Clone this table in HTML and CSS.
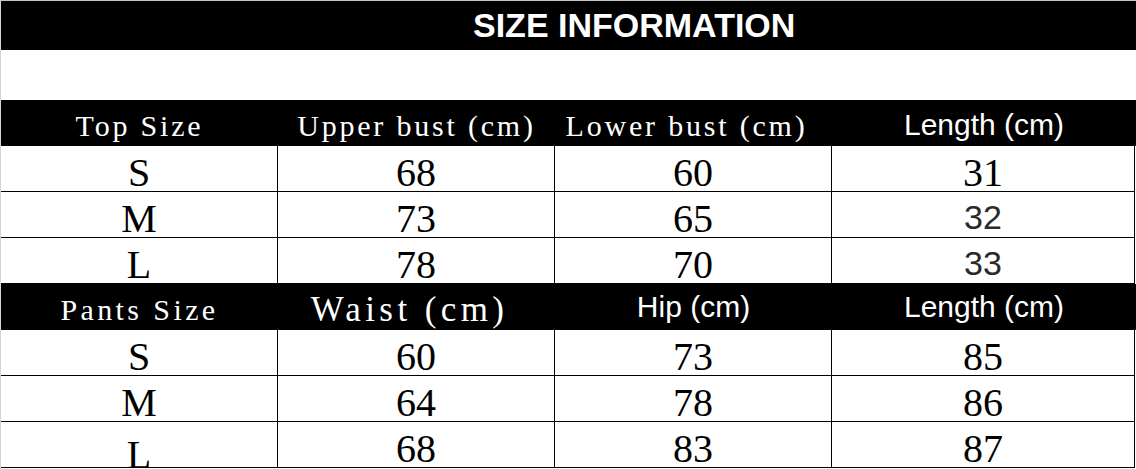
FILE: index.html
```html
<!DOCTYPE html>
<html lang="en">
<head>
<meta charset="utf-8">
<title>Size Information</title>
<link rel="stylesheet" href="styles.css">
</head>
<body>
<div class="sheet">
  <div class="title"><h1 class="title-text">SIZE INFORMATION</h1></div>
  <div class="gap"></div>

  <div class="row head">
    <div class="hd">Top Size</div>
    <div class="hd">Upper bust (cm)</div>
    <div class="hd shift">Lower bust (cm)</div>
    <div class="hs hs-top">Length (cm)</div>
  </div>
  <div class="row data">
    <div class="num">S</div>
    <div class="num">68</div>
    <div class="num">60</div>
    <div class="num">31</div>
  </div>
  <div class="row data">
    <div class="num">M</div>
    <div class="num">73</div>
    <div class="num">65</div>
    <div class="num sans">32</div>
  </div>
  <div class="row data">
    <div class="num">L</div>
    <div class="num">78</div>
    <div class="num">70</div>
    <div class="num sans">33</div>
  </div>

  <div class="row head">
    <div class="hd hd-pants">Pants Size</div>
    <div class="hd waist shift">Waist (cm)</div>
    <div class="hs">Hip (cm)</div>
    <div class="hs">Length (cm)</div>
  </div>
  <div class="row data">
    <div class="num">S</div>
    <div class="num">60</div>
    <div class="num">73</div>
    <div class="num">85</div>
  </div>
  <div class="row data">
    <div class="num">M</div>
    <div class="num">64</div>
    <div class="num">78</div>
    <div class="num">86</div>
  </div>
  <div class="row data last">
    <div class="num drop">L</div>
    <div class="num">68</div>
    <div class="num">83</div>
    <div class="num">87</div>
  </div>
</div>
</body>
</html>
```

FILE: styles.css
```css
html, body {
  margin: 0;
  padding: 0;
  background: #ffffff;
}

.sheet {
  width: 1136px;
  height: 469px;
  box-sizing: border-box;
  border-top: 1px solid #c6c6c6;
  border-left: 1px solid #d2d2e2;
  overflow: hidden;
  background: #ffffff;
}

.title {
  height: 49px;
  background: #000000;
  padding-left: 472px;
}

.title-text {
  margin: 0;
  color: #ffffff;
  font-family: "Liberation Sans", Arial, sans-serif;
  font-weight: bold;
  font-size: 34px;
  line-height: 49px;
}

.gap {
  height: 50px;
}

.row {
  display: grid;
  grid-template-columns: 277px 277px 277px 1fr;
  height: 46px;
}

.head {
  background: #000000;
  color: #ffffff;
}

.data {
  margin-right: 1px;
}

.data > div {
  box-sizing: border-box;
  height: 46px;
  border-right: 1px solid #000000;
  border-bottom: 1px solid #000000;
}

.hd {
  box-sizing: border-box;
  font-family: "Liberation Serif", "Times New Roman", serif;
  font-size: 30px;
  letter-spacing: 2.8px;
  line-height: 46px;
  padding-top: 3px;
  text-align: center;
  white-space: nowrap;
}

.hd-pants {
  letter-spacing: 3.4px;
}

.waist {
  font-size: 35px;
  letter-spacing: 4.4px;
  padding-top: 3px;
}

.shift {
  padding-right: 14px;
}

.hs {
  box-sizing: border-box;
  font-family: "Liberation Sans", Arial, sans-serif;
  font-size: 30px;
  line-height: 46px;
  text-align: center;
  white-space: nowrap;
}

.hs-top {
  padding-top: 2px;
}

.num {
  font-family: "Liberation Serif", "Times New Roman", serif;
  font-size: 40px;
  line-height: 36px;
  padding-top: 9px;
  text-align: center;
  color: #000000;
}

.sans {
  font-family: "Liberation Sans", Arial, sans-serif;
  font-size: 34px;
  color: #2a2a2a;
  padding-top: 7px;
}

.last .drop {
  padding-top: 15px;
  overflow: hidden;
}
```
